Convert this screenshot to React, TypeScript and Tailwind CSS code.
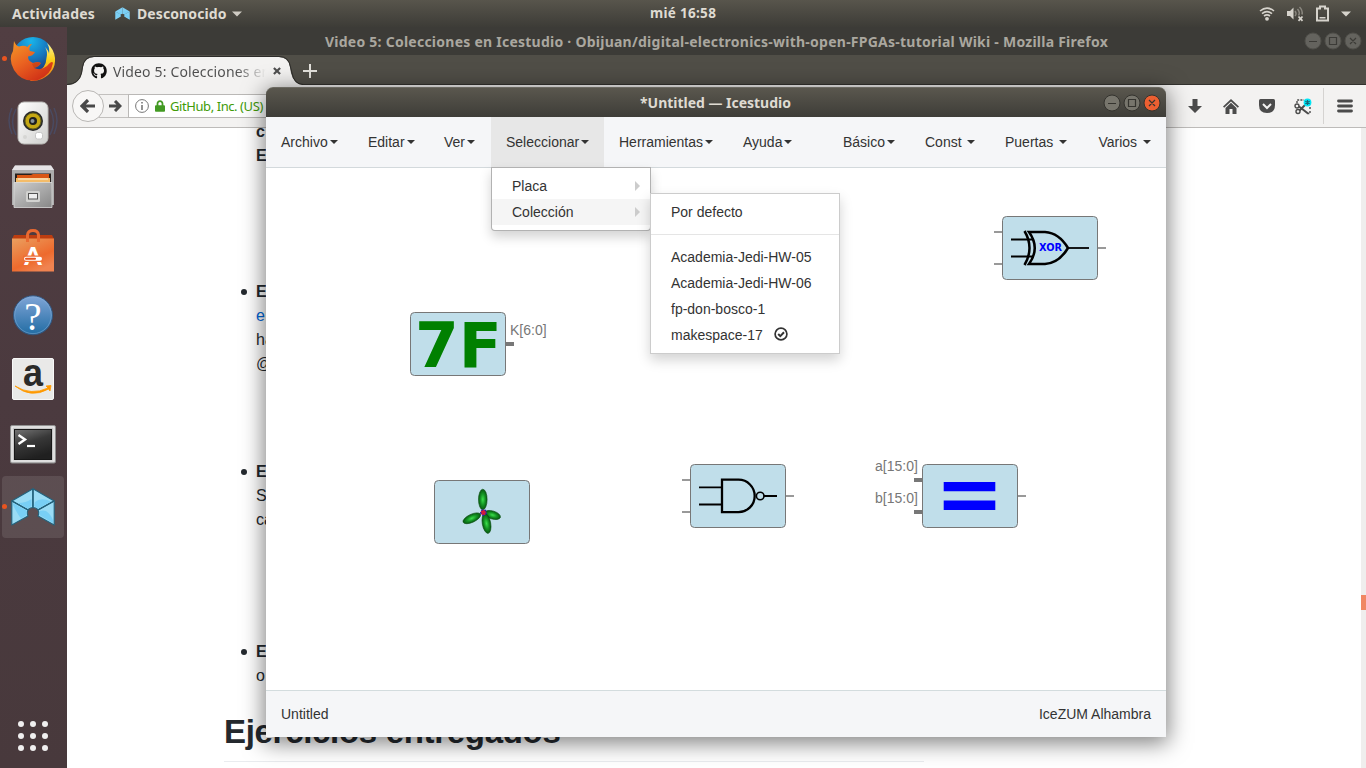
import React from "react";
import { FaGithub, FaLock } from "react-icons/fa";

const UI = "font-['Noto_Sans',sans-serif]";

function Caret() {
  return <span className="ml-[2px] inline-block h-0 w-0 border-x-4 border-t-4 border-x-transparent border-t-[#333] align-middle" />;
}

function IceLogo({ small = false }: { small?: boolean }) {
  const w = small ? 0 : 1.1;
  return (
    <svg className={small ? "h-[13px] w-[15px]" : "h-[38px] w-[44px]"} viewBox="0 0 44 38">
      <g fill={small ? "#7fd0f5" : "#9adcf5"} stroke="#23627c" strokeWidth={w} strokeLinejoin="round">
        <path d="M22 .7.8 13 17 22Q18.500 19.500 22 19.500Z" />
        <path d="M22 .7 43.200 13 27 22Q25.500 19.500 22 19.500Z" />
        <path d="M.8 13 17 22Q15.500 24.500 17 28L.8 37Z" />
        <path d="M43.200 13 27 22Q28.500 24.500 27 28L43.200 37Z" />
      </g>
      <g fill="#78cff5">
        <path d="M24 14Q30 9 40 13.500L27.500 20.500 23 18Z" />
        <path d="M20.500 11v7L16.500 20.500 7 15Q15 15 20.500 11Z" />
        <path d="M2 17Q7 27 10 30.500L15.500 27V22.500L2 15Z" />
        <path d="M29 23Q37 20 42 32V35L28.500 27Z" />
      </g>
      {!small && <path d="M22 1V19.500M1 13 17 22M43 13 27 22" stroke="#23627c" strokeWidth="1.300" fill="none" />}
    </svg>
  );
}

function TopBar() {
  return (
    <header className={`flex h-[27px] w-full items-center bg-gradient-to-b from-[#58554c] to-[#3d3c37] text-[13.5px] font-bold text-[#dfdbd2] ${UI}`}>
      <div className="w-[115px] pl-[12px] text-[14px] tracking-[0.2px]">Actividades</div>
      <IceLogo small />
      <div className="ml-[7px] w-[92px] text-[14px] tracking-[0.1px]">Desconocido</div>
      <svg className="ml-[3px] h-[6px] w-[10px]" viewBox="0 0 10 6"><path d="M0 .5H10L5 5.500Z" fill="#cfcbc3" /></svg>
      <div className="ml-[408px] w-[74px] text-[13.5px] tracking-[0.3px] whitespace-nowrap">mié 16:58</div>
      <div className="ml-auto flex items-center pr-[15px] text-[#d6d3cc]">
        <svg width="16" height="16" viewBox="0 0 16 16" fill="none" stroke="#d6d3cc" strokeWidth="1.6">
          <path d="M1 5Q8 -.8 15 5M3 7.600Q8 3.500 13 7.600M5 10Q8 7.800 11 10" />
          <circle cx="8" cy="12.800" r="1.900" fill="#d6d3cc" stroke="none" />
        </svg>
        <svg className="ml-[11px]" width="18" height="16" viewBox="0 0 18 16">
          <path d="M1 5H4L7.500 1.500V13.500L4 10H1Z" fill="#d6d3cc" />
          <path d="M9 5Q11 7.500 9 10M11.500 3Q14.500 6.500 12.500 9.500M13.500 1Q17 4.500 16 8.500" fill="none" stroke="#8a877f" strokeWidth="1.500" />
          <path d="M12.500 10.500 16.500 14.800M16.500 10.500 12.500 14.800" stroke="#d6d3cc" strokeWidth="1.800" />
        </svg>
        <svg className="ml-[12px]" width="13" height="17" viewBox="0 0 13 17">
          <path d="M1 3.500H4V1.500H9V3.500H12V15.500H1Z" fill="none" stroke="#d6d3cc" strokeWidth="2" />
          <path d="M3.500 12H9.500V13.500H3.500Z" fill="#d6d3cc" />
        </svg>
        <svg className="ml-[12px]" width="10" height="6" viewBox="0 0 10 6"><path d="M0 .5H10L5 5.500Z" fill="#d6d3cc" /></svg>
      </div>
    </header>
  );
}

function FirefoxIcon() {
  return (
    <svg width="46" height="46" viewBox="0 0 46 46">
      <defs>
        <radialGradient id="globe" cx=".45" cy=".1" r=".85"><stop offset="0" stopColor="#19b5ea" /><stop offset=".5" stopColor="#1676be" /><stop offset="1" stopColor="#1c2c6a" /></radialGradient>
        <linearGradient id="fox" x1="0" y1="0" x2=".7" y2="1"><stop offset="0" stopColor="#f39a27" /><stop offset=".5" stopColor="#ea6321" /><stop offset="1" stopColor="#cf2f16" /></linearGradient>
        <linearGradient id="tail" x1="0" y1="0" x2="0" y2="1"><stop offset="0" stopColor="#fff39a" /><stop offset=".45" stopColor="#fbd019" /><stop offset="1" stopColor="#e76a1a" /></linearGradient>
      </defs>
      <circle cx="23" cy="21.500" r="20.500" fill="url(#globe)" />
      <path d="M37 7Q44 13 45 22 46 36 32 43 26 45.500 20 45L26 36Q36 33 36.500 22 38 15 35 11Q39 15 39 18 40 12 37 7Z" fill="url(#tail)" />
      <path d="M4 5Q6 10 9 10.500 14 9 17.500 11 19 8 22 8 18 12 20 15L25 16Q23 20 18 20.500 18 25 23 27 28 25 31 27 29 31 24 32 31 35 37 30 42 24 43 27 41 39 28 44 12 47 4 34-2 23 3 15Z" fill="url(#fox)" />
      <path d="M22 28Q27 25 30 27 29 31 24 32Z" fill="#b83a14" opacity=".5" />
    </svg>
  );
}

function SpeakerIcon() {
  return (
    <svg width="50" height="46" viewBox="0 0 50 46">
      <defs><linearGradient id="spk" x1="0" x2="1" y2="1"><stop stopColor="#fff" /><stop offset="1" stopColor="#cfcfcd" /></linearGradient></defs>
      <path d="M8 9Q1 22 8 35M4 8Q-2 20 4 34M42 9Q49 22 42 35M46 8Q52 20 46 34" fill="none" stroke="#465476" strokeWidth="1.500" opacity=".6" />
      <rect x="10" y="2" width="30" height="42" rx="6" fill="url(#spk)" stroke="#b8b8b5" />
      <circle cx="25" cy="21" r="10" fill="#292a2a" />
      <circle cx="25" cy="21" r="8" fill="#c5a814" stroke="#65601a" />
      <circle cx="25" cy="21" r="4" fill="#1e2020" />
      <circle cx="24.500" cy="21" r="2" fill="#89949b" />
      <rect x="27.500" y="32.500" width="7" height="6.500" rx="2" fill="#fff" stroke="#c6c6c6" />
      <circle cx="17" cy="37" r="2" fill="#d6d6d4" />
    </svg>
  );
}

function FilesIcon() {
  return (
    <svg width="44" height="46" viewBox="0 0 44 46">
      <defs><linearGradient id="cab" x1="0" x2="1" y2="1"><stop stopColor="#cecece" /><stop offset="1" stopColor="#878787" /></linearGradient></defs>
      <path d="M4 1.500H40L43 6V41H1V6Z" fill="#adadad" />
      <path d="M4 1.500H40L43 6H1Z" fill="#e6e3e6" />
      <rect x="4" y="9.500" width="36" height="9" fill="#28211d" />
      <path d="M6 11H20L22 10H38V19H6Z" fill="#d95714" />
      <path d="M5 14H39V19H5Z" fill="#f4bc69" /><path d="M7 15H37" stroke="#fff3dd" />
      <path d="M3 18.500H41V43.500H3Z" fill="url(#cab)" stroke="#dadada" strokeWidth=".8" />
      <rect x="15" y="27" width="14" height="11" rx="1.500" fill="#d2d2d0" />
      <rect x="17.500" y="29.500" width="9" height="5.500" fill="#eee" stroke="#555" />
    </svg>
  );
}

function SoftwareIcon() {
  return (
    <svg width="42" height="46" viewBox="0 0 42 46">
      <defs><linearGradient id="bag" x1="0" y1="0" x2=".6" y2="1"><stop stopColor="#eaa060" /><stop offset=".7" stopColor="#ee6a2d" /><stop offset="1" stopColor="#f08350" /></linearGradient></defs>
      <path d="M2 7H40L42 11H0Z" fill="#bc3d10" />
      <path d="M0 10.500H42V43.500H0Z" fill="url(#bag)" />
      <path d="M15.500 14V7Q16 2.500 21 2.500T26.500 7V14" fill="none" stroke="#ea6a31" strokeWidth="3" />
      <text x="21" y="37" textAnchor="middle" fontFamily="Lato, sans-serif" fontWeight="900" fontSize="25" fill="#fff">A</text>
      <path d="M11 27.500H31V34H11Z" fill="#ee6f34" />
      <rect x="12" y="28.800" width="18" height="4" rx="2" fill="#fff" /><rect x="13" y="29.800" width="11" height="2" rx="1" fill="#e95420" />
    </svg>
  );
}

function HelpIcon() {
  return (
    <svg width="42" height="42" viewBox="0 0 42 42">
      <defs><linearGradient id="help" x2="0" y2="1"><stop stopColor="#80a5d7" /><stop offset="1" stopColor="#216ca3" /></linearGradient></defs>
      <circle cx="21" cy="21.300" r="19.500" fill="url(#help)" stroke="#315680" />
      <circle cx="21" cy="21.300" r="18.300" fill="none" stroke="#8bb1d7" strokeWidth=".8" opacity=".6" />
      <text x="21" y="35.500" textAnchor="middle" fontFamily="Liberation Serif, serif" fontSize="39" fill="#fff">?</text>
    </svg>
  );
}

function AmazonIcon() {
  return (
    <svg width="42" height="42" viewBox="0 0 42 42">
      <rect x=".5" y=".5" width="41" height="41" rx="1.500" fill="#e9e9e8" stroke="#f8f8f8" />
      <text x="21" y="27.500" textAnchor="middle" fontFamily="Liberation Sans, sans-serif" fontWeight="700" fontSize="38" textLength="20" lengthAdjust="spacingAndGlyphs" fill="#2a2a29">a</text>
      <path d="M3 28Q19 38 36 30L34 28 39 27.500 38 33 36.500 31Q19 41 3 28Z" fill="#f90" stroke="#f90" strokeWidth=".8" />
    </svg>
  );
}

function TerminalIcon() {
  return (
    <svg className="mt-[3px]" width="46" height="39" viewBox="0 0 46 39">
      <defs><linearGradient id="term" x1="0" x2=".4" y2="1"><stop stopColor="#757575" /><stop offset=".5" stopColor="#383838" /><stop offset="1" stopColor="#202020" /></linearGradient></defs>
      <rect x=".5" y=".5" width="45" height="37.500" rx="1.500" fill="#c6c6c6" stroke="#909090" />
      <rect x="2" y="2" width="42" height="34" fill="none" stroke="#efefef" strokeWidth="1.200" />
      <rect x="4.500" y="4.500" width="37" height="30" fill="url(#term)" stroke="#171717" />
      <path d="M8.500 10 15 14.500 8.500 19" fill="none" stroke="#fff" strokeWidth="2.400" /><path d="M17 21H25" stroke="#fff" strokeWidth="2.200" />
    </svg>
  );
}

function Dock() {
  const items = [<FirefoxIcon />, <SpeakerIcon />, <FilesIcon />, <SoftwareIcon />, <HelpIcon />, <AmazonIcon />, <TerminalIcon />, <IceLogo />];
  return (
    <aside className="flex h-full w-[67px] shrink-0 flex-col bg-gradient-to-b from-[#513e42] via-[#4b3a3f] to-[#48393c]">
      {items.map((icon, i) => (
        <div key={i} className="flex h-16 items-center pl-[2px]">
          <div className={`relative flex h-[62px] w-[62px] items-center justify-center rounded-[4px] ${i === 7 ? "bg-white/10" : ""}`}>
            {icon}
            {(i === 0 || i === 7) && <span className="absolute top-[28px] left-0 h-[5px] w-[5px] rounded-full bg-[#e95420]" />}
          </div>
        </div>
      ))}
      <div className="mt-auto mb-[17px] ml-[18px] grid w-[30px] grid-cols-3 gap-[6px]">
        {Array.from({ length: 9 }, (_, i) => <span key={i} className="h-[6px] w-[6px] rounded-full bg-[#f0efef]" />)}
      </div>
    </aside>
  );
}

function WinButtons({ active }: { active?: boolean }) {
  const ring = active ? "#34332e" : "#504f4a";
  const fill = active ? "#77756c" : "#64635e";
  const ink = active ? "#35342f" : "#3c3b37";
  return (
    <svg width="58" height="18" viewBox="0 0 58 18">
      {[9, 29, 49].map((x, i) => <circle key={x} cx={x} cy="9" r="8" fill={active && i === 2 ? "#ec5f31" : fill} stroke={ring} />)}
      <path d="M5 9.500H13M25.500 5.500H32.500V12.500H25.500ZM46 6 52 12M52 6 46 12" fill="none" stroke={ink} strokeWidth="1.200" />
    </svg>
  );
}

function FirefoxWindow() {
  return (
    <section className="flex min-w-0 flex-1 flex-col bg-white">
      <div className={`flex h-[28px] shrink-0 items-center bg-[#3c3b37] text-[14px] font-bold text-[#aaa79f] ${UI}`}>
        <div className="ml-[258px] w-[800px] tracking-[0.245px] whitespace-nowrap">Video 5: Colecciones en Icestudio · Obijuan/digital-electronics-with-open-FPGAs-tutorial Wiki - Mozilla Firefox</div>
        <div className="ml-auto flex pr-[4px]"><WinButtons /></div>
      </div>
      <div className="flex h-[30px] shrink-0 items-stretch border-b border-[#33322e] bg-[#504e47]">
        <div className={`relative flex w-[236px] items-center pl-[24px] text-[14px] text-[#4d4d4d] ${UI}`}>
          <svg className="absolute inset-0" width="236" height="31" viewBox="0 0 236 31"><path d="M0 31V30Q12 30 15 18L16 12Q18 2 27 2H212Q221 2 223 12L224 18Q227 30 236 30V31Z" fill="#f3f2f1" /><path d="M0 29.500Q12 29 14.500 18L15.500 12Q17 1.500 27 1.500H212Q222 1.500 223.500 12L225 18Q227 29 236 29.500" fill="none" stroke="#2d2c29" /></svg>
          <FaGithub className="relative mt-[2px] h-[16px] w-[16px] text-[#111]" />
          <span className="relative mt-[3px] ml-[6px] w-[153px] overflow-hidden bg-gradient-to-r from-[#4d4d4d] from-80% to-[#f3f2f1] bg-clip-text tracking-[0.15px] whitespace-nowrap text-transparent">Video 5: Colecciones en</span>
          <svg className="relative mt-[3px] ml-[7px]" width="8" height="8" viewBox="0 0 9 9"><path d="M1 1 8 8M8 1 1 8" stroke="#4f4f4f" strokeWidth="2.400" /></svg>
        </div>
        <svg className="mt-[9px]" width="14" height="14" viewBox="0 0 14 14"><path d="M7 0V14M0 7H14" stroke="#e3e1dc" strokeWidth="2" /></svg>
      </div>
      <div className="flex h-[43px] shrink-0 items-center border-b border-[#bdbbb9] bg-[#f3f2f1]">
        <div className="z-10 ml-[5px] flex h-[32px] w-[32px] items-center justify-center rounded-full border border-[#b9b7b5] bg-[#f8f7f6]">
          <svg width="16" height="14" viewBox="0 0 16 14"><path d="M8 1 2 7 8 13M2.500 7H15" fill="none" stroke="#494949" strokeWidth="3.200" /></svg>
        </div>
        <div className="-ml-[5px] flex h-[24px] w-[29px] items-center justify-end border-y border-[#c2c0be] pr-[6px]">
          <svg width="13" height="12" viewBox="0 0 13 12"><path d="M6 1 11 6 6 11M0 6H10" fill="none" stroke="#494949" strokeWidth="3" /></svg>
        </div>
        <div className={`flex h-[24px] w-[900px] items-center border border-[#bab8b6] bg-white pl-[6px] text-[13px] text-[#419b09] ${UI}`}>
          <svg width="14" height="14" viewBox="0 0 14 14"><circle cx="7" cy="7" r="6.400" fill="none" stroke="#777" /><path d="M7 6V11M7 3V4.600" stroke="#777" strokeWidth="1.600" /></svg>
          <FaLock className="ml-[6px] h-[12px] w-[10px] text-[#439a23]" />
          <span className="mt-px ml-[5px] tracking-[-0.42px] whitespace-nowrap">GitHub, Inc. (US)</span>
        </div>
        <div className="ml-auto flex items-center pr-[13px] text-[#4b4b4b]">
          <svg width="14" height="14" viewBox="0 0 14 14"><path d="M4.500 0H9.500V7H14L7 14 0 7H4.500Z" fill="currentColor" /></svg>
          <svg className="ml-[21px]" width="16" height="15" viewBox="0 0 16 15"><path d="M8 0 0 7.500 1.200 8.700 8 2.500 14.800 8.700 16 7.500Z" fill="currentColor" /><path d="M8 3.800 2.500 9V15H6.500V10H9.500V15H13.500V9Z" fill="currentColor" /></svg>
          <svg className="ml-[20px]" width="16" height="14" viewBox="0 0 16 14"><path d="M1.500 0H14.500Q16 0 16 1.500V6Q16 14 8 14T0 6V1.500Q0 0 1.500 0Z" fill="currentColor" /><path d="M4 5 8 9 12 5" fill="none" stroke="#f3f2f1" strokeWidth="2" /></svg>
          <svg className="ml-[19px]" width="18" height="17" viewBox="0 0 18 17"><g fill="none" stroke="#4b4b4b" strokeWidth="1.400"><circle cx="3" cy="8" r="2" /><circle cx="4" cy="13.500" r="2" /><path d="M5 8.500 14 15.500M5.500 12.500 11 7" strokeWidth="2" /><path d="M3 5V2H10M16 9V11M16 13V15.500H13" strokeDasharray="2 1.200" /></g><circle cx="13.500" cy="4.500" r="3.900" fill="#00e5f5" /><path d="M13.500 2V7M11.300 3.300 15.700 5.700M15.700 3.300 11.300 5.700" stroke="#176878" strokeWidth="1.200" /></svg>
          <span className="ml-[11px] h-[36px] w-px bg-[#d5d3d1]" />
          <svg className="ml-[13px]" width="16" height="14" viewBox="0 0 16 14"><path d="M1.500 2H14.500M1.500 7H14.500M1.500 12H14.500" stroke="currentColor" strokeWidth="2.800" strokeLinecap="round" /></svg>
        </div>
      </div>
      <div className="flex min-h-0 flex-1 overflow-hidden font-['Liberation_Sans',Arial,sans-serif] text-[16px] leading-[24px] text-[#24292e]">
        <article className="w-[857px] pl-[157px]">
          <div className="-mt-[8px] pl-[32px] font-bold">c<br />E</div>
          <ul className="pl-[32px]">
            <li className="relative mt-[112px]"><Dot /><b>E</b><br /><span className="text-[#0366d6]">e</span><br />ha<br />@</li>
            <li className="relative mt-[84px]"><Dot /><b>E</b><br />S<br />ca</li>
            <li className="relative mt-[108px]"><Dot /><b>E</b><br />o</li>
          </ul>
          <h1 className="mt-[24px] border-b border-[#eaecef] pb-[9px] text-[33px] leading-[40px] font-bold tracking-[-0.31px] whitespace-nowrap">Ejercicios entregados</h1>
        </article>
        <div className="ml-auto h-full w-[5px] bg-[#efeeed] pt-[467px]"><div className="h-[15px] bg-[#f08763]" /></div>
      </div>
    </section>
  );
}

function Dot() {
  return <span className="absolute top-[9px] -left-[15px] h-[6px] w-[6px] rounded-full bg-[#24292e]" />;
}

type BlockProps = { place: string; ins?: number[]; out?: boolean; thickIn?: boolean; thickOut?: boolean; children: React.ReactNode };

function Block({ place, ins = [], out = true, thickIn, thickOut, children }: BlockProps) {
  return (
    <div className={`absolute ${place}`}>
      <svg width="112" height="64" viewBox="-8 0 112 64" className="-ml-[8px]">
        {ins.map((y) => <path key={y} d={`M-8 ${y}H0`} stroke={thickIn ? "#777" : "#999"} strokeWidth={thickIn ? 4 : 2} />)}
        {out && <path d="M96 32H104" stroke={thickOut ? "#777" : "#999"} strokeWidth={thickOut ? 4 : 2} />}
        <rect x=".5" y=".5" width="95" height="63" rx="4" fill="#c0deea" stroke="#777" />
        {children}
      </svg>
    </div>
  );
}

function Canvas() {
  const label = "absolute text-[14px] leading-[16px] text-[#777]";
  return (
    <div className="relative flex-1">
      <Block place="top-[48px] left-[736px]" ins={[16, 48]}>
        <g fill="none" stroke="#000" strokeWidth="2.500">
          <path d="M9 23.500H32M9 40.500H32" strokeWidth="1.800" />
          <path d="M22.500 15Q32.500 32 22.500 49" />
          <path d="M27 16H43Q57 17 66 32 57 47 43 48H27Q38.500 32 27 16Z" />
          <path d="M66 32H87" strokeWidth="1.800" />
        </g>
        <text x="37" y="35.200" fontFamily="DejaVu Sans" fontWeight="bold" fontSize="9.700" textLength="23" lengthAdjust="spacingAndGlyphs" fill="#00f">XOR</text>
      </Block>
      <Block place="top-[144px] left-[144px]" thickOut>
        <text x="5" y="55" fontFamily="DejaVu Sans" fontWeight="bold" fontSize="63" fill="green">7F</text>
      </Block>
      <span className={`${label} top-[154px] left-[244px]`}>K[6:0]</span>
      <Block place="top-[312px] left-[168px]" out={false}>
        <defs>
          <radialGradient id="leaf"><stop stopColor="#3ce04c" /><stop offset=".55" stopColor="#149323" /><stop offset="1" stopColor="#075a10" /></radialGradient>
        </defs>
        <g fill="url(#leaf)" stroke="#064d0c" strokeWidth=".6">
          <ellipse cx="37.800" cy="38.300" rx="9.500" ry="4" transform="rotate(-25 37.800 38.300)" />
          <ellipse cx="58.500" cy="35" rx="8.200" ry="4" transform="rotate(17 58.500 35)" />
          <ellipse cx="52.500" cy="43.500" rx="4.200" ry="10" transform="rotate(-10 52.500 43.500)" />
          <ellipse cx="48.800" cy="19.500" rx="4.300" ry="10.300" />
        </g>
        <circle cx="49.500" cy="32.500" r="2.800" fill="#d51a3c" stroke="#2323a8" strokeWidth="1.300" strokeDasharray="2 1.500" />
      </Block>
      <Block place="top-[296px] left-[424px]" ins={[16, 48]}>
        <g fill="none" stroke="#000" strokeWidth="2.300">
          <path d="M9 23.300H32M9 40.500H32M74 32H87" strokeWidth="1.800" />
          <path d="M32 15.700H48.500A16.200 16.200 0 0 1 48.500 48.100H32Z" />
          <circle cx="70.200" cy="32" r="3.800" strokeWidth="1.600" />
        </g>
      </Block>
      <Block place="top-[296px] left-[656px]" ins={[16, 48]} thickIn>
        <path d="M21.700 18H73.300V27.300H21.700ZM21.700 36.500H73.300V46H21.700Z" fill="#00f" />
      </Block>
      <span className={`${label} top-[290px] left-[609px]`}>a[15:0]</span>
      <span className={`${label} top-[322px] left-[609px]`}>b[15:0]</span>
    </div>
  );
}

function MenuRow({ label, arrow, active, children }: { label: string; arrow?: boolean; active?: boolean; children?: React.ReactNode }) {
  return (
    <div className={`flex h-[26px] items-center pl-5 leading-5 ${active ? "bg-[#f5f5f5]" : ""}`}>
      <span className="whitespace-nowrap">{label}</span>
      {children}
      {arrow && <span className="mr-[10px] ml-auto h-0 w-0 border-y-[5px] border-l-[5px] border-y-transparent border-l-[#ccc]" />}
    </div>
  );
}

function IcestudioWindow() {
  const item = "flex h-[50px] shrink-0 items-center pl-[15px] whitespace-nowrap";
  return (
    <section className="absolute top-[87px] left-[266px] flex h-[650px] w-[900px] flex-col rounded-t-[7px] bg-white font-['Liberation_Sans',Arial,sans-serif] text-[14px] text-[#333] shadow-[0_4px_22px_2px_rgba(0,0,0,0.5)]">
      <div className={`flex h-[30px] shrink-0 items-center rounded-t-[7px] border-t border-[#6c6a62] bg-gradient-to-b from-[#5a574e] to-[#3e3d38] text-[14px] font-bold text-[#dfdbd2] ${UI}`}>
        <div className="ml-[374px] tracking-[-0.02px] whitespace-nowrap">*Untitled — Icestudio</div>
        <div className="ml-auto flex pr-[5px]"><WinButtons active /></div>
      </div>
      <nav className="flex h-[51px] shrink-0 border-b border-[#d3d9dc] bg-[#f5f6f8]">
        <div className={`${item} w-[87px]`}>Archivo<Caret /></div>
        <div className={`${item} w-[76px]`}>Editar<Caret /></div>
        <div className={`${item} w-[62px]`}>Ver<Caret /></div>
        <div className={`${item} w-[113px] bg-[#e7e7e7]`}>Seleccionar<Caret /></div>
        <div className={`${item} w-[124px]`}>Herramientas<Caret /></div>
        <div className={`${item} w-[80px]`}>Ayuda<Caret /></div>
        <div className={`${item} ml-auto w-[82px]`}>Básico<Caret /></div>
        <div className={`${item} w-[80px]`}>Const&nbsp;<Caret /></div>
        <div className={`${item} w-[92px]`}>Puertas&nbsp;<Caret /></div>
        <div className={`${item} w-[84px] justify-end pr-[15px]`}>Varios&nbsp;<Caret /></div>
      </nav>
      <Canvas />
      <footer className="flex h-[47px] shrink-0 items-center justify-between border-t border-[#d3dcde] bg-[#f5f6f8] px-[15px]">
        <span>Untitled</span><span>IceZUM Alhambra</span>
      </footer>
      <div className="absolute top-[80px] left-[225px] w-[160px] rounded-b-[4px] border border-black/30 bg-white py-[5px] shadow-[0_6px_12px_rgba(0,0,0,0.175)]">
        <MenuRow label="Placa" arrow />
        <MenuRow label="Colección" arrow active />
      </div>
      <div className="absolute top-[106px] left-[384px] w-[190px] border border-[#ccc] bg-white py-[5px] shadow-[0_6px_12px_rgba(0,0,0,0.175)]">
        <MenuRow label="Por defecto" />
        <div className="my-[9px] h-px bg-[#e5e5e5]" />
        <MenuRow label="Academia-Jedi-HW-05" />
        <MenuRow label="Academia-Jedi-HW-06" />
        <MenuRow label="fp-don-bosco-1" />
        <MenuRow label="makespace-17">
          <svg className="-mt-[2px] ml-[11px]" width="14" height="14" viewBox="0 0 14 14" fill="none" stroke="#333"><circle cx="7" cy="7" r="5.900" strokeWidth="1.700" /><path d="M4.200 7 6.300 9.100 10 5.200" strokeWidth="2" /></svg>
        </MenuRow>
      </div>
    </section>
  );
}

export default function App() {
  return (
    <div className="relative flex h-[768px] w-[1366px] flex-col overflow-hidden">
      <TopBar />
      <div className="flex min-h-0 flex-1"><Dock /><FirefoxWindow /></div>
      <IcestudioWindow />
    </div>
  );
}
